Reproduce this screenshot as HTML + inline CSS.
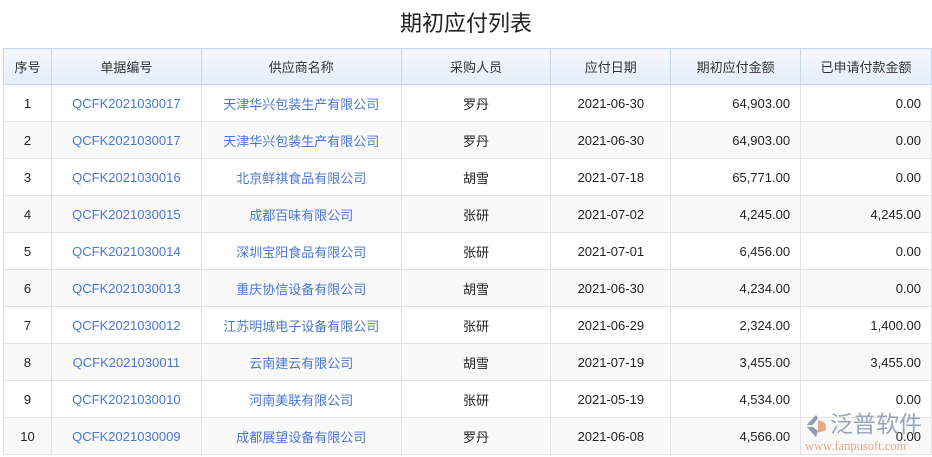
<!DOCTYPE html>
<html><head><meta charset="utf-8"><style>
body{margin:0;width:932px;height:457px;overflow:hidden;background:#fff;font-family:"Liberation Sans","Noto Sans CJK SC",sans-serif;position:relative}
h1{margin:0;position:absolute;top:6px;left:0;width:932px;text-align:center;font-size:22px;font-weight:normal;color:#222;font-family:"Liberation Sans","Noto Sans CJK SC",sans-serif}
table{position:absolute;left:3px;top:48px;border-collapse:collapse;table-layout:fixed;font-size:13px;color:#222}
td,th{height:36px;padding:0;border:1px solid #e3e3e3;white-space:nowrap;overflow:hidden}
th{height:35px;font-weight:normal;background:linear-gradient(#f5f8fd,#e4edfb);border-color:#c9d7ea;color:#333}
td{text-align:center}
tr:nth-child(odd) td{background:#f9f9f9}
.a{color:#4a76d2}
.r{text-align:right;padding-right:10px}
.logo{position:absolute;left:803px;top:408px;width:129px;height:48px;white-space:nowrap}
</style></head><body>
<h1>期初应付列表</h1>
<table>
<colgroup><col style="width:48px"><col style="width:150px"><col style="width:200px"><col style="width:150px"><col style="width:120px"><col style="width:130px"><col style="width:131px"></colgroup>
<tr><th>序号</th><th>单据编号</th><th>供应商名称</th><th>采购人员</th><th>应付日期</th><th>期初应付金额</th><th>已申请付款金额</th></tr>
<tr><td>1</td><td class="a">QCFK2021030017</td><td class="a">天津华兴包装生产有限公司</td><td>罗丹</td><td>2021-06-30</td><td class="r">64,903.00</td><td class="r">0.00</td></tr>
<tr><td>2</td><td class="a">QCFK2021030017</td><td class="a">天津华兴包装生产有限公司</td><td>罗丹</td><td>2021-06-30</td><td class="r">64,903.00</td><td class="r">0.00</td></tr>
<tr><td>3</td><td class="a">QCFK2021030016</td><td class="a">北京鲜祺食品有限公司</td><td>胡雪</td><td>2021-07-18</td><td class="r">65,771.00</td><td class="r">0.00</td></tr>
<tr><td>4</td><td class="a">QCFK2021030015</td><td class="a">成都百味有限公司</td><td>张研</td><td>2021-07-02</td><td class="r">4,245.00</td><td class="r">4,245.00</td></tr>
<tr><td>5</td><td class="a">QCFK2021030014</td><td class="a">深圳宝阳食品有限公司</td><td>张研</td><td>2021-07-01</td><td class="r">6,456.00</td><td class="r">0.00</td></tr>
<tr><td>6</td><td class="a">QCFK2021030013</td><td class="a">重庆协信设备有限公司</td><td>胡雪</td><td>2021-06-30</td><td class="r">4,234.00</td><td class="r">0.00</td></tr>
<tr><td>7</td><td class="a">QCFK2021030012</td><td class="a">江苏明城电子设备有限公司</td><td>张研</td><td>2021-06-29</td><td class="r">2,324.00</td><td class="r">1,400.00</td></tr>
<tr><td>8</td><td class="a">QCFK2021030011</td><td class="a">云南建云有限公司</td><td>胡雪</td><td>2021-07-19</td><td class="r">3,455.00</td><td class="r">3,455.00</td></tr>
<tr><td>9</td><td class="a">QCFK2021030010</td><td class="a">河南美联有限公司</td><td>张研</td><td>2021-05-19</td><td class="r">4,534.00</td><td class="r">0.00</td></tr>
<tr><td>10</td><td class="a">QCFK2021030009</td><td class="a">成都展望设备有限公司</td><td>罗丹</td><td>2021-06-08</td><td class="r">4,566.00</td><td class="r">0.00</td></tr>
</table>
<div class="logo">
<svg width="28" height="28" viewBox="0 0 30 30" style="position:absolute;left:0;top:4px;opacity:.85"><path d="M14 3 L4 14 L10 14 L16 7 Z" fill="#7a8aa8"/><path d="M4 16 L14 27 L16 20 L10 16 Z" fill="#7a8aa8"/><path d="M16 9 Q27 10 24 20 L16 22 Z" fill="#e49a73"/></svg>
<div style="position:absolute;left:27px;top:1px;font-size:23px;line-height:30px;color:#8a97ae;opacity:.85">泛普软件</div>
<div style="position:absolute;left:2px;top:31px;font-size:12.5px;color:#e49a73;font-family:'Liberation Serif',serif;opacity:.85">www.fanpusoft.com</div>
</div>
</body></html>
